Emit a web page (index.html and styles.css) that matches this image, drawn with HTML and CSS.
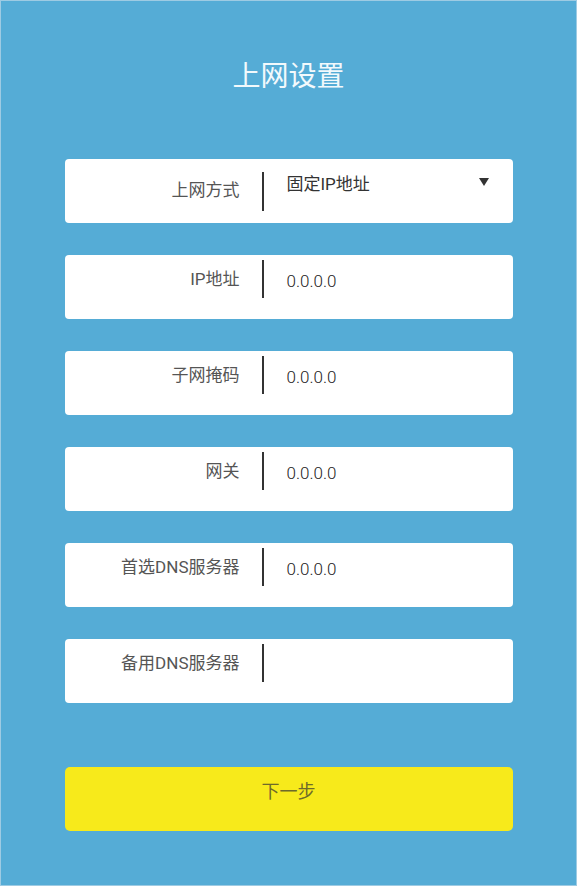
FILE: index.html
```html
<!DOCTYPE html>
<html lang="zh-CN">
<head>
<meta charset="utf-8">
<title>上网设置</title>
<link rel="stylesheet" href="styles.css">
</head>
<body>
<div class="page">
  <h1 class="title">上网设置</h1>
  <div class="form">
    <div class="field field-select">
      <div class="label">上网方式</div>
      <div class="divider"></div>
      <div class="value">固定IP地址<span class="caret"></span></div>
    </div>
    <div class="field">
      <div class="label">IP地址</div>
      <div class="divider"></div>
      <div class="value">0.0.0.0</div>
    </div>
    <div class="field">
      <div class="label">子网掩码</div>
      <div class="divider"></div>
      <div class="value">0.0.0.0</div>
    </div>
    <div class="field">
      <div class="label">网关</div>
      <div class="divider"></div>
      <div class="value">0.0.0.0</div>
    </div>
    <div class="field">
      <div class="label">首选DNS服务器</div>
      <div class="divider"></div>
      <div class="value">0.0.0.0</div>
    </div>
    <div class="field">
      <div class="label">备用DNS服务器</div>
      <div class="divider"></div>
      <div class="value"></div>
    </div>
  </div>
  <button class="next">下一步</button>
</div>
</body>
</html>
```
FILE: styles.css
```css
html, body {
  margin: 0;
  padding: 0;
  background: #55acd6;
}
.page {
  width: 577px;
  height: 886px;
  box-sizing: border-box;
  border: 1px solid #9ecbe3;
  padding-top: 59px;
  font-family: Roboto, "Noto Sans CJK SC", sans-serif;
  display: flex;
  flex-direction: column;
  align-items: center;
}
.title {
  margin: 0;
  font-size: 28px;
  font-weight: 400;
  line-height: 34px;
  color: #f2f9fc;
}
.form {
  margin-top: 65px;
  display: flex;
  flex-direction: column;
  gap: 32px;
}
.field {
  width: 448px;
  height: 64px;
  background: #fff;
  border-radius: 4px;
  display: flex;
  align-items: flex-start;
}
.label {
  width: 175px;
  text-align: right;
  font-size: 17px;
  line-height: 20px;
  padding-top: 14px;
  color: #555;
}
.divider {
  width: 2px;
  height: 38px;
  margin-top: 5px;
  margin-left: 22px;
  background: #333;
}
.value {
  margin-left: 23px;
  padding-top: 16px;
  font-size: 17px;
  font-weight: 300;
  line-height: 20px;
  color: #222;
  flex: 1;
  position: relative;
}
.field-select .label {
  padding-top: 21px;
}
.field-select .divider {
  margin-top: 13px;
  height: 39px;
}
.field-select .value {
  padding-top: 15px;
  font-weight: 400;
  color: #333;
}
.caret {
  position: absolute;
  right: 24px;
  top: 19px;
  width: 0;
  height: 0;
  border-left: 5px solid transparent;
  border-right: 5px solid transparent;
  border-top: 8px solid #333;
}
.next {
  margin-top: 64px;
  width: 448px;
  height: 64px;
  border: none;
  border-radius: 5px;
  background: #f7ea1b;
  color: #6e6a2a;
  font-family: Roboto, "Noto Sans CJK SC", sans-serif;
  font-size: 18px;
  padding: 0 0 18px;
}
```
